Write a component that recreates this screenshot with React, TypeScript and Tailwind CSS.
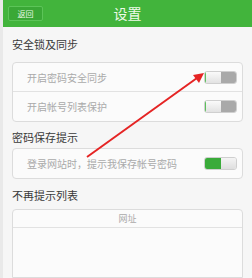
const font = { fontFamily: '"Noto Sans CJK SC", "Noto Sans", sans-serif' };

function Toggle({ on }: { on: boolean }) {
  return (
    <div className="flex h-[13px] w-[33px] overflow-hidden rounded-[3px] border border-[#cfcfcf]">
      {on ? (
        <>
          <div className="h-full w-1/2 bg-[#3aab3a]" />
          <div className="h-full w-1/2 bg-gradient-to-b from-[#f4f4f4] to-[#dedede]" />
        </>
      ) : (
        <>
          <div className="h-full w-1/2 border-l border-[#5cc05c] bg-gradient-to-b from-[#fafafa] to-[#e2e2e2]" />
          <div className="h-full w-1/2 bg-[#a9a9a9]" />
        </>
      )}
    </div>
  );
}

function Row({ label, on, last }: { label: string; on: boolean; last?: boolean }) {
  return (
    <div
      className={`flex h-[29px] items-center justify-between pl-[14px] pr-[5px] ${
        last ? "" : "border-b border-[#e2e2e2]"
      }`}
    >
      <span className="text-[10px] text-[#aaaaaa]">{label}</span>
      <Toggle on={on} />
    </div>
  );
}

export default function App() {
  return (
    <div className="relative flex h-[278px] w-[252px] overflow-hidden bg-[#f6f6f6]" style={font}>
      {/* strip of the page behind */}
      <div className="flex w-[3px] flex-col bg-[#e9e9e9]" />

      <div className="flex flex-1 flex-col">
        <div className="grid h-[27px] grid-cols-[1fr_auto_1fr] items-center bg-[#42b43c]">
          <div className="pl-[5px]">
            <div className="flex h-[15px] w-[35px] items-center justify-center rounded-[2px] border border-[#5cc458] bg-[#3aa836] text-[8px] text-[#e9f7e6]">
              返回
            </div>
          </div>
          <span className="text-[14px] text-[#eefbe9]">设置</span>
          <div />
        </div>

        <div className="flex flex-1 flex-col px-[9px]">
          <div className="mt-[9px] h-[17px] text-[11px] leading-[17px] text-[#3a3a3a]">安全锁及同步</div>
          <div className="mt-[9px] rounded-[4px] border border-[#dcdcdc] bg-[#fbfbfb]">
            <Row label="开启密码安全同步" on={false} />
            <Row label="开启帐号列表保护" on={false} last />
          </div>

          <div className="mt-[8px] h-[14px] text-[11px] leading-[14px] text-[#3a3a3a]">密码保存提示</div>
          <div className="mt-[4px] rounded-[4px] border border-[#dcdcdc] bg-[#fbfbfb]">
            <Row label="登录网站时，提示我保存帐号密码" on last />
          </div>

          <div className="mt-[9px] h-[14px] text-[11px] leading-[14px] text-[#3a3a3a]">不再提示列表</div>
          <div className="mt-[7px] flex-1 rounded-t-[4px] border border-[#dcdcdc] bg-[#fbfbfb]">
            <div className="flex h-[18px] items-center justify-center border-b border-[#e2e2e2] text-[9px] text-[#aaaaaa]">
              网址
            </div>
          </div>
        </div>
      </div>

      {/* red annotation arrow */}
      <svg className="pointer-events-none absolute left-0 top-0" width="252" height="278" viewBox="0 0 252 278">
        <line x1="87" y1="157" x2="197" y2="78" stroke="#e52424" strokeWidth="2" />
        <polygon points="204,73 193,75 199,83" fill="#e52424" />
      </svg>
    </div>
  );
}
